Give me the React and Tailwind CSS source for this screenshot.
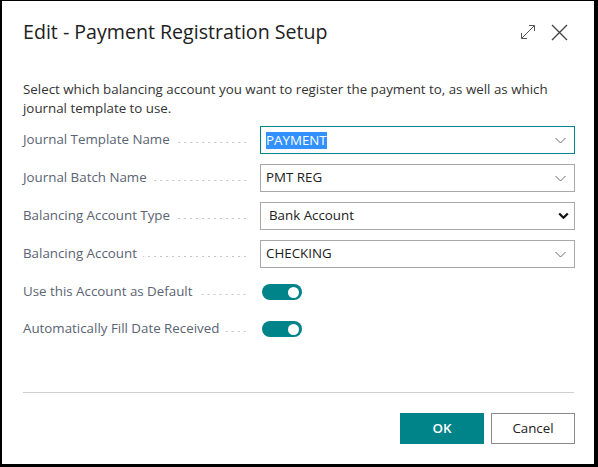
import React from 'react'

const font = { fontFamily: '"Open Sans", "Noto Sans", sans-serif' }

function Chevron() {
  return (
    <svg width="11" height="7" viewBox="0 0 11 7" className="shrink-0">
      <path d="M0.5 1 L5.5 6 L10.5 1" fill="none" stroke="#6b6b6b" strokeWidth="1" />
    </svg>
  )
}

function BoldChevron() {
  return (
    <svg width="11" height="8" viewBox="0 0 11 8" className="shrink-0 -mr-[3px]">
      <path d="M1.2 1.5 L5.5 5.8 L9.8 1.5" fill="none" stroke="#111" strokeWidth="2.2" />
    </svg>
  )
}

function Label({ children }) {
  return (
    <div className="flex items-center w-[237px] pr-[12px] text-[13.33px] text-[#5a6472]">
      <span className="whitespace-nowrap">{children}</span>
      <span className="flex-1 ml-[6px] mt-[5px] h-[3px] bg-[radial-gradient(circle,#c4c4c4_0.9px,transparent_1.1px)] bg-[length:6px_3px] bg-right" />
    </div>
  )
}

function Field({ label, children, focused }) {
  return (
    <div className="flex items-center h-[28px]">
      <Label>{label}</Label>
      <div className={`flex items-center justify-between w-[315px] h-[28px] px-[5px] pr-[8px] bg-white text-[13.33px] text-[#212121] border ${focused ? 'border-[#008489] border-[1.5px]' : 'border-[#a8a8a8]'}`}>
        {children}
      </div>
    </div>
  )
}

function Toggle({ label }) {
  return (
    <div className="flex items-center h-[16px]">
      <Label>{label}</Label>
      <div className="ml-[2px] w-[40px] h-[16px] rounded-full bg-[#008489] flex items-center justify-end pr-[3px]">
        <span className="w-[11px] h-[11px] rounded-full bg-white" />
      </div>
    </div>
  )
}

export default function App() {
  return (
    <div className="w-[598px] h-[467px] bg-white border-t border-l-2 border-r-[4px] border-b-[3px] border-black flex flex-col" style={font}>
      <div className="flex items-center justify-between pl-[21px] pr-[26px] pt-[15px] h-[47px]">
        <h1 className="text-[19.6px] text-[#212121] leading-none">Edit - Payment Registration Setup</h1>
        <div className="flex items-center gap-[15px]">
          <svg width="16" height="16" viewBox="0 0 16 16">
            <path d="M1.5 14.5 L14.5 1.5 M1.5 14.5 V9 M1.5 14.5 H7 M14.5 1.5 V7 M14.5 1.5 H9" fill="none" stroke="#555" strokeWidth="1" />
          </svg>
          <svg width="17" height="17" viewBox="0 0 17 17">
            <path d="M1 1 L16 16 M16 1 L1 16" fill="none" stroke="#444" strokeWidth="1.4" />
          </svg>
        </div>
      </div>

      <p className="pl-[21px] pr-[28px] mt-[32px] text-[13.33px] leading-[19px] text-[#333]">
        Select which balancing account you want to register the payment to, as well as which journal template to use.
      </p>

      <div className="pl-[21px] mt-[8px] flex flex-col gap-[10px]">
        <Field label="Journal Template Name" focused>
          <span className="bg-[#3390ff] text-white leading-[17px]">PAYMENT</span>
          <Chevron />
        </Field>
        <Field label="Journal Batch Name">
          <span>PMT REG</span>
          <Chevron />
        </Field>
        <Field label="Balancing Account Type">
          <span className="pl-[3px]">Bank Account</span>
          <BoldChevron />
        </Field>
        <Field label="Balancing Account">
          <span>CHECKING</span>
          <Chevron />
        </Field>
      </div>

      <div className="pl-[21px] mt-[16px] flex flex-col gap-[21px]">
        <Toggle label="Use this Account as Default" />
        <Toggle label="Automatically Fill Date Received" />
      </div>

      <div className="ml-[21px] mr-[20px] mt-[55px] border-t border-[#cfcfcf]" />

      <div className="flex justify-end gap-[7px] pr-[19px] mt-[20px]">
        <button className="w-[84px] h-[31px] bg-[#008489] text-white text-[13.33px] font-semibold">OK</button>
        <button className="w-[84px] h-[31px] bg-white border border-[#8a8a8a] text-[#212121] text-[13.33px]">Cancel</button>
      </div>
    </div>
  )
}
